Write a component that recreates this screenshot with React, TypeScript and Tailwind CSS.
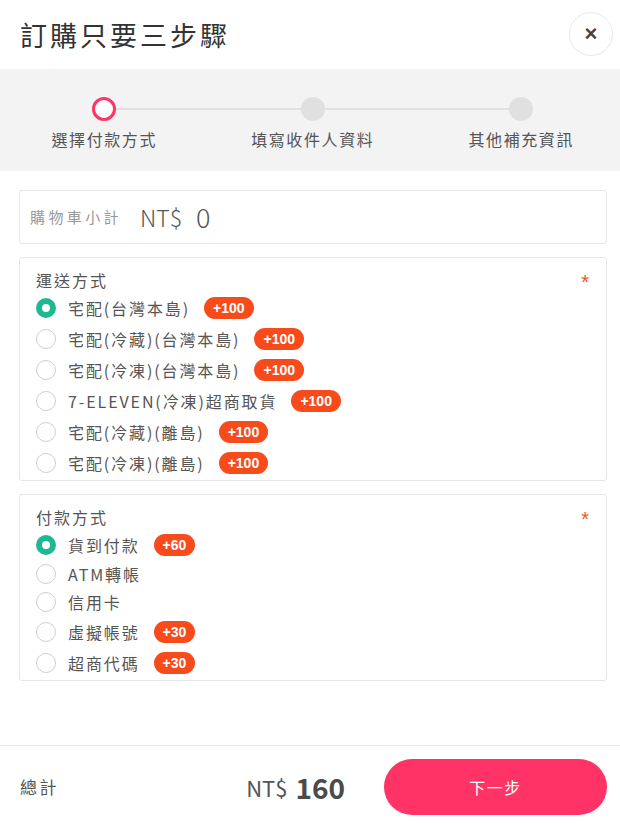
import { useState } from "react"

const shippingOptions = [
  { label: "宅配(台灣本島)", fee: 100 },
  { label: "宅配(冷藏)(台灣本島)", fee: 100 },
  { label: "宅配(冷凍)(台灣本島)", fee: 100 },
  { label: "7-ELEVEN(冷凍)超商取貨", fee: 100 },
  { label: "宅配(冷藏)(離島)", fee: 100 },
  { label: "宅配(冷凍)(離島)", fee: 100 },
]

const paymentOptions = [
  { label: "貨到付款", fee: 60 },
  { label: "ATM轉帳", fee: 0 },
  { label: "信用卡", fee: 0 },
  { label: "虛擬帳號", fee: 30 },
  { label: "超商代碼", fee: 30 },
]

const steps = ["選擇付款方式", "填寫收件人資料", "其他補充資訊"]

function Radio({ checked }: { checked: boolean }) {
  return checked ? (
    <span className="w-5 h-5 shrink-0 rounded-full border-[6px] border-[#20b894] bg-white" />
  ) : (
    <span className="w-5 h-5 shrink-0 rounded-full border border-[#cfcfcf] bg-white" />
  )
}

function FeeBadge({ fee }: { fee: number }) {
  return (
    <span className="ml-[14px] inline-flex h-[22px] items-center rounded-full bg-[#f84b1c] px-[9px] font-['Liberation_Sans',Arial,sans-serif] text-[14px] font-bold leading-none text-white">
      +{fee}
    </span>
  )
}

interface OptionGroupProps {
  title: string
  options: { label: string; fee: number }[]
  selected: number
  onSelect: (i: number) => void
}

function OptionGroup({ title, options, selected, onSelect }: OptionGroupProps) {
  return (
    <div className="rounded-[3px] border border-[#e6e6e6] px-4 pt-[10px] pb-[2px]">
      <div className="flex h-6 items-center justify-between">
        <span className="text-[16px] leading-6 tracking-[2px] text-[#555]">{title}</span>
        <span className="mr-[1px] mt-[4px] font-['Liberation_Sans',Arial,sans-serif] text-[20px] leading-6 text-[#f4511e]">*</span>
      </div>
      {options.map((opt, i) => (
        <button
          key={opt.label}
          onClick={() => onSelect(i)}
          className={`flex w-full items-center text-left ${opt.fee > 0 ? "h-[31px]" : "h-[28px]"}`}
        >
          <Radio checked={selected === i} />
          <span className="ml-3 text-[16px] leading-6 tracking-[1.9px] text-[#555]">{opt.label}</span>
          {opt.fee > 0 && <FeeBadge fee={opt.fee} />}
        </button>
      ))}
    </div>
  )
}

export default function App() {
  const [shipping, setShipping] = useState(0)
  const [payment, setPayment] = useState(0)

  const total = shippingOptions[shipping].fee + paymentOptions[payment].fee

  return (
    <div className="flex h-[824px] w-[620px] flex-col bg-white font-['Noto_Sans_CJK_TC','Noto_Sans',sans-serif] text-[#444]">
      {/* header */}
      <div className="flex h-[69px] shrink-0 items-center justify-between pl-5 pr-[7px]">
        <h1 className="text-[27px] leading-9 tracking-[3px] text-[#333]">訂購只要三步驟</h1>
        <button className="mb-[2px] flex h-11 w-11 items-center justify-center rounded-full border border-[#e8e8e8] font-['Liberation_Sans',Arial,sans-serif] text-[22px] font-bold leading-none text-[#444]">
          ×
        </button>
      </div>

      {/* steps */}
      <div className="flex h-[102px] shrink-0 overflow-hidden bg-[#f3f3f3]">
        {steps.map((s, i) => (
          <div key={s} className="flex w-[208.5px] shrink-0 flex-col items-center pt-[28px]">
            <div className="flex w-full items-center">
              <div className={`h-[2px] flex-1 ${i === 0 ? "bg-transparent" : "bg-[#e0e0e0]"}`} />
              {i === 0 ? (
                <span className="h-6 w-6 rounded-full border-[3px] border-[#ff3366] bg-white" />
              ) : (
                <span className="h-6 w-6 rounded-full bg-[#e0e0e0]" />
              )}
              <div className={`h-[2px] flex-1 ${i === 2 ? "bg-transparent" : "bg-[#e0e0e0]"}`} />
            </div>
            <span className="mt-[6px] text-[16px] leading-6 tracking-[1.6px] text-[#555]">{s}</span>
          </div>
        ))}
      </div>

      {/* content */}
      <div className="flex flex-1 flex-col gap-[13px] pl-[19px] pr-[13px] pt-[19px]">
        <div className="flex h-[54px] items-center rounded-[3px] border border-[#e6e6e6] pl-[10px]">
          <span className="text-[15px] tracking-[3.4px] text-[#999]">購物車小計</span>
          <span className="ml-[18px] text-[23px] font-light text-[#555]">NT$</span>
          <span className="ml-[14px] text-[27px] font-light text-[#555]">0</span>
        </div>

        <OptionGroup title="運送方式" options={shippingOptions} selected={shipping} onSelect={setShipping} />
        <OptionGroup title="付款方式" options={paymentOptions} selected={payment} onSelect={setPayment} />
      </div>

      {/* footer */}
      <div className="flex h-[79px] shrink-0 items-center border-t border-[#e6e6e6] pt-[4px] pl-5 pr-[13px]">
        <span className="flex-1 text-[17px] tracking-[2.5px] text-[#555]">總計</span>
        <span className="text-[22px] text-[#555]">NT$</span>
        <span className="ml-[8px] text-[28px] font-semibold text-[#4a4a4a]">{total}</span>
        <button className="ml-[39px] flex h-14 w-[223px] items-center justify-center rounded-full bg-[#ff3366] text-[16px] tracking-[1.5px] text-white">
          下一步
        </button>
      </div>
    </div>
  )
}
